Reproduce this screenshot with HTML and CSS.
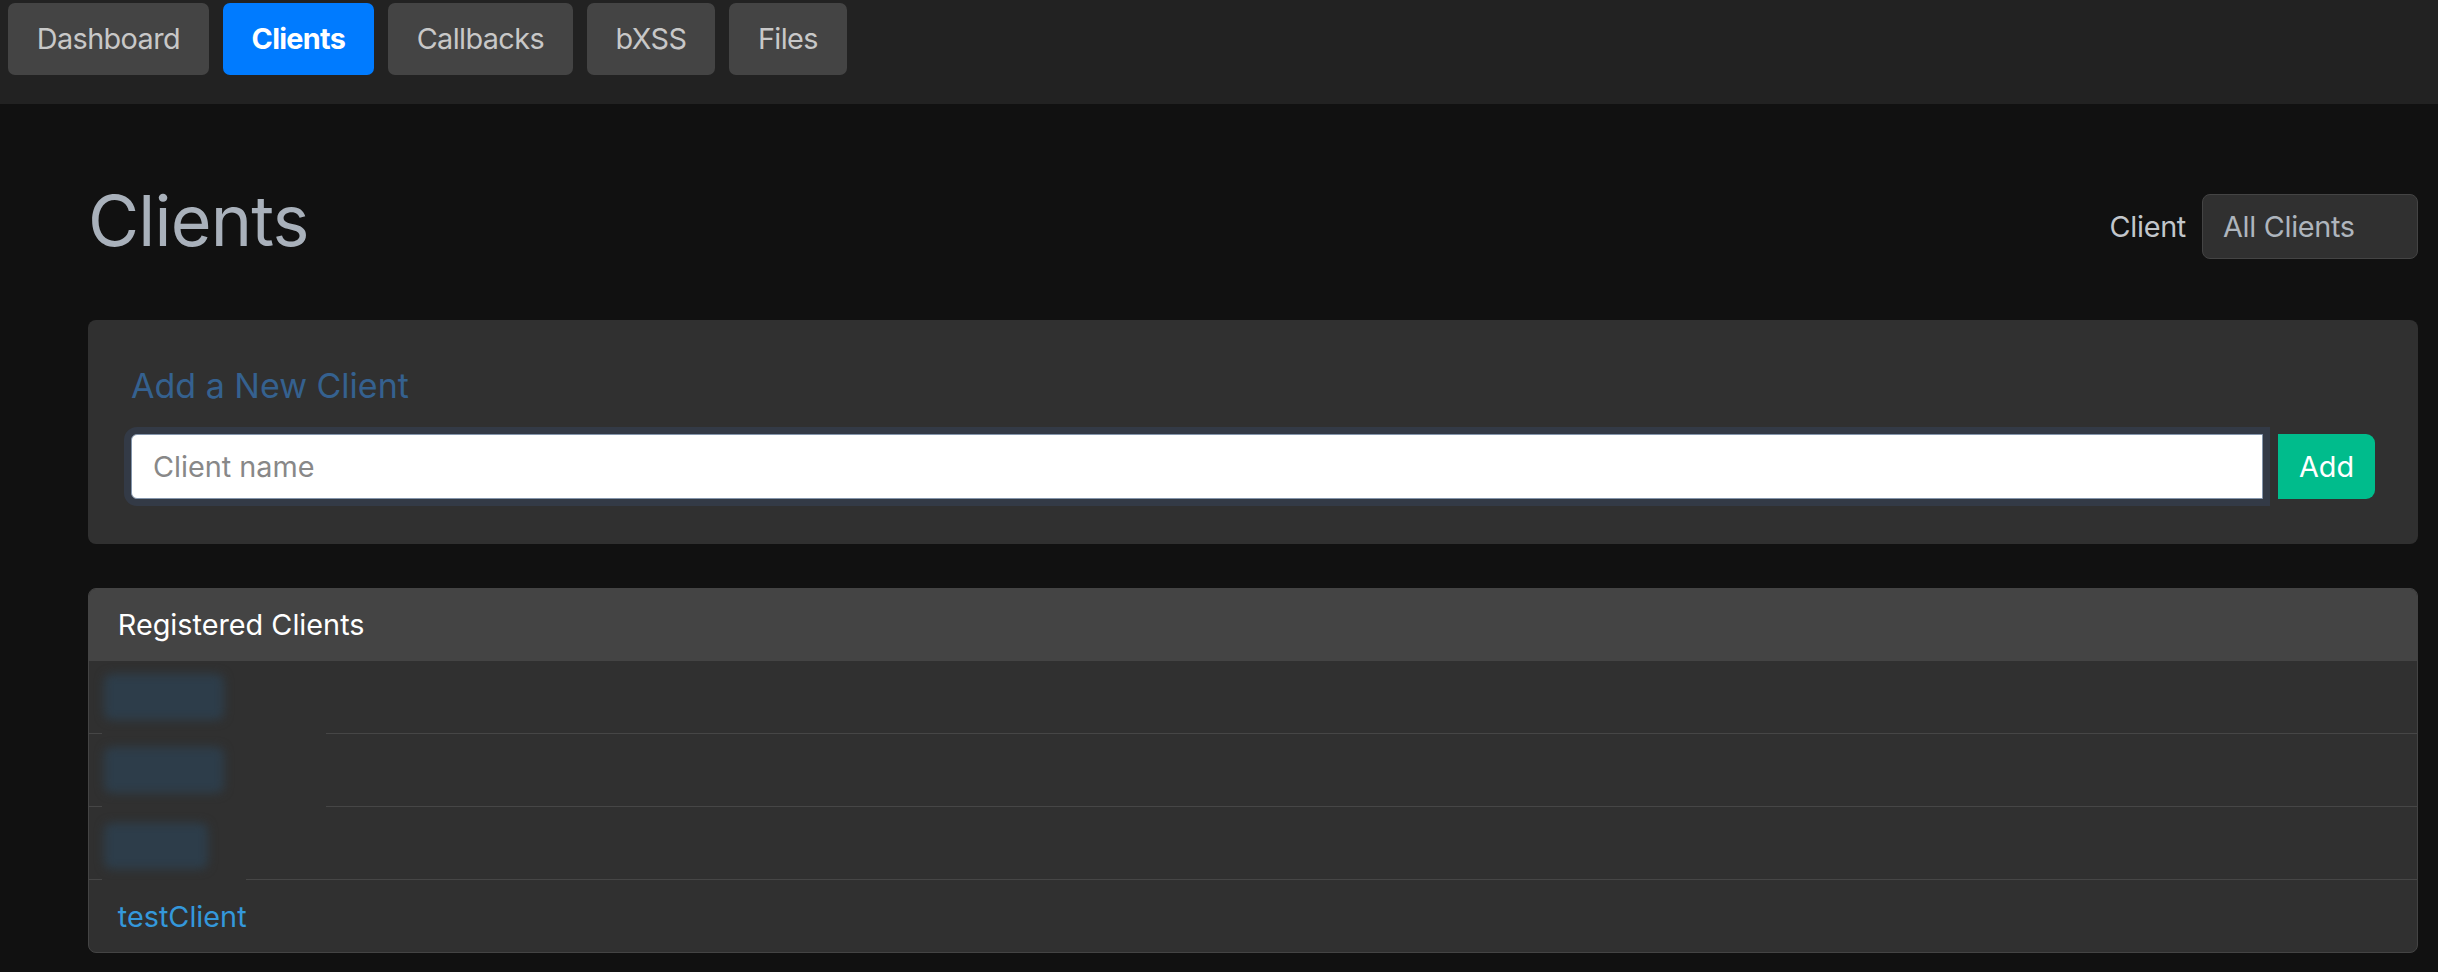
FILE: index.html
```html
<!DOCTYPE html>
<html lang="en">
<head>
<meta charset="utf-8">
<title>Clients</title>
<link rel="stylesheet" href="styles.css">
</head>
<body>
<nav class="topnav">
  <a class="nav-btn" href="#">Dashboard</a>
  <a class="nav-btn active" href="#">Clients</a>
  <a class="nav-btn" href="#">Callbacks</a>
  <a class="nav-btn" href="#">bXSS</a>
  <a class="nav-btn" href="#">Files</a>
</nav>
<main class="page">
  <div class="page-head">
    <h1 class="page-title">Clients</h1>
    <label class="client-filter">
      <span class="filter-label">Client</span>
      <select class="filter-select">
        <option>All Clients</option>
      </select>
    </label>
  </div>

  <section class="card add-card">
    <h5 class="add-title">Add a New Client</h5>
    <form class="add-form">
      <input class="add-input" type="text" placeholder="Client name">
      <button class="add-btn" type="button">Add</button>
    </form>
  </section>

  <section class="card list-card">
    <div class="list-header">Registered Clients</div>
    <ul class="client-list">
      <li class="client-row redacted-row"><span class="blob blob-a"></span></li>
      <li class="client-row redacted-row"><span class="blob blob-b"></span></li>
      <li class="client-row redacted-row short"><span class="blob blob-c"></span></li>
      <li class="client-row last"><a class="client-link" href="#">testClient</a></li>
    </ul>
  </section>
</main>
</body>
</html>
```

FILE: styles.css
```css
* { box-sizing: border-box; }

html, body {
  margin: 0;
  padding: 0;
  background: #111111;
  font-family: Inter, "Noto Sans", "Liberation Sans", sans-serif;
  color: #c8c8c8;
}

.topnav {
  display: flex;
  gap: 14px;
  height: 104px;
  padding: 3px 8px 0 8px;
  background: #222222;
}

.nav-btn {
  display: block;
  height: 72px;
  padding: 0 28.8px;
  line-height: 72px;
  font-size: 28.8px;
  letter-spacing: -0.6px;
  color: #c8c8c8;
  background: #444444;
  border-radius: 7px;
  text-decoration: none;
}

.nav-btn.active {
  background: #007bff;
  color: #ffffff;
  font-weight: 700;
  letter-spacing: -0.7px;
}

.page {
  padding: 0 20px 0 88px;
}

.page-head {
  display: flex;
  align-items: center;
  justify-content: space-between;
  margin-top: 74px;
  height: 86px;
}

.page-title {
  margin: 0;
  font-size: 70px;
  font-weight: 400;
  line-height: 84px;
  color: #a9b1bb;
  letter-spacing: -0.8px;
}

.client-filter {
  display: flex;
  align-items: center;
  gap: 16px;
  margin-top: 10px;
}

.filter-label {
  font-size: 28.8px;
  letter-spacing: -0.3px;
  color: #c2c6cb;
}

.filter-select {
  appearance: none;
  -webkit-appearance: none;
  width: 216px;
  height: 65px;
  padding: 0 20px;
  font-family: inherit;
  font-size: 28.8px;
  letter-spacing: -0.3px;
  color: #aeb5bd;
  background: #303030;
  border: 1px solid #444444;
  border-radius: 8px;
}

.card {
  background: #303030;
  border-radius: 8px;
}

.add-card {
  margin-top: 56px;
  height: 224px;
  padding: 46px 43px 43px 43px;
}

.add-title {
  margin: 0 0 28px 0;
  font-size: 34px;
  font-weight: 400;
  line-height: 40px;
  color: #35618f;
}

.add-form {
  display: flex;
  gap: 15px;
  margin: 0;
}

.add-input {
  flex: 1;
  height: 65px;
  padding: 0 21px;
  font-family: inherit;
  font-size: 28.8px;
  color: #222;
  background: #ffffff;
  border: 1px solid #8495ab;
  border-radius: 6px 0 0 6px;
  box-shadow: 0 0 0 7px #333a46;
  outline: none;
}

.add-input::placeholder { color: #888888; }

.add-btn {
  width: 97px;
  height: 65px;
  padding: 0;
  font-family: inherit;
  font-size: 28.8px;
  color: #ffffff;
  background: #00bc8c;
  border: none;
  border-radius: 0 9px 9px 0;
}

.list-card {
  margin-top: 44px;
  border: 1px solid #444444;
  overflow: hidden;
}

.list-header {
  height: 72px;
  padding: 0 28.8px;
  line-height: 72px;
  font-size: 28.8px;
  color: #ffffff;
  background: #444444;
}

.client-list {
  list-style: none;
  margin: 0;
  padding: 0;
}

.client-row {
  height: 73px;
  padding: 0 28.8px;
  display: flex;
  align-items: center;
  border-bottom: 1px solid #464646;
}

.client-row.redacted-row {
  border-image: linear-gradient(to right, #464646 14px, transparent 14px, transparent 238px, #464646 238px) 1;
}

.client-row.redacted-row.short {
  border-image: linear-gradient(to right, #464646 14px, transparent 14px, transparent 158px, #464646 158px) 1;
}

.client-row.last {
  border-bottom: none;
  height: 72px;
}

.blob {
  display: block;
  height: 46px;
  margin-left: -14px;
  background: #2d3d4a;
  border-radius: 8px;
  filter: blur(5px);
}

.blob-a { width: 120px; }
.blob-b { width: 120px; }
.blob-c { width: 104px; margin-top: 6px; }

.client-link {
  font-size: 28.8px;
  color: #3498db;
  text-decoration: none;
}
```
